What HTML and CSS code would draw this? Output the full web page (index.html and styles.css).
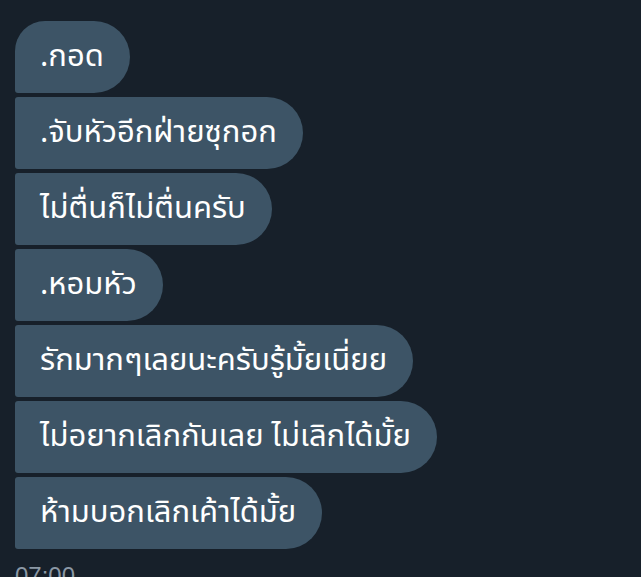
FILE: index.html
```html
<!DOCTYPE html>
<html lang="th">
<head>
<meta charset="utf-8">
<link rel="stylesheet" href="styles.css">
</head>
<body>
<div class="thread">
  <div class="msg first">.กอด</div>
  <div class="msg">.จับหัวอีกฝ่ายซุกอก</div>
  <div class="msg">ไม่ตื่นก็ไม่ตื่นครับ</div>
  <div class="msg">.หอมหัว</div>
  <div class="msg">รักมากๆเลยนะครับรู้มั้ยเนี่ยย</div>
  <div class="msg">ไม่อยากเลิกกันเลย ไม่เลิกได้มั้ย</div>
  <div class="msg last">ห้ามบอกเลิกเค้าได้มั้ย</div>
  <div class="time">07:00</div>
</div>
</body>
</html>
```
FILE: styles.css
```css
html, body {
  margin: 0;
  padding: 0;
  background: #17202a;
  height: 100%;
  overflow: hidden;
}
.thread {
  display: flex;
  flex-direction: column;
  align-items: flex-start;
  gap: 4px;
  padding: 21px 0 0 15px;
  font-family: "Noto Sans Thai", "Noto Sans Thai UI", "Noto Sans", sans-serif;
}
.msg {
  background: #3d5466;
  color: #ffffff;
  font-size: 31px;
  line-height: 72px;
  height: 72px;
  padding: 0 26px 0 25px;
  border-radius: 3px 36px 36px 3px;
  white-space: nowrap;
}
.msg.first {
  border-top-left-radius: 30px;
}
.time {
  margin-top: 9px;
  color: #8b98a5;
  font-size: 24px;
  font-family: "Liberation Sans", sans-serif;
}
```
